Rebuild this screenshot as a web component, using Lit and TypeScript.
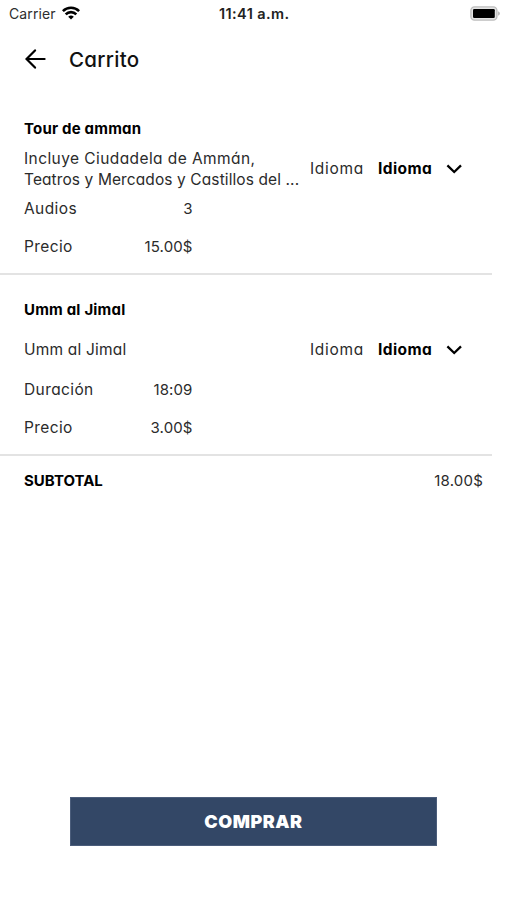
import { LitElement, html, css } from "lit";
import { customElement, property } from "lit/decorators.js";

@customElement("status-bar")
class StatusBar extends LitElement {
  static styles = css`
    :host {
      display: grid;
      grid-template-columns: 1fr auto 1fr;
      align-items: center;
      height: 28px;
      padding: 0 7px 0 9px;
      font: 400 14px/28px Inter, "Liberation Sans", sans-serif;
      font-feature-settings: normal;
      color: #2e2e2e;
    }
    .left { display: flex; align-items: center; gap: 6px; letter-spacing: 0.1px; }
    .time { font-weight: 600; font-size: 14.5px; color: #222; letter-spacing: 0.4px; margin-right: 0.5px; }
    .battery { justify-self: end; }
    svg { display: block; }
    .wifi { margin-top: -2px; }
    .battery { margin-top: -2px; }
  `;
  render() {
    return html`
      <div class="left">
        <span>Carrier</span>
        <svg class="wifi" width="18" height="14" viewBox="0 0 18 14" fill="none" stroke="#000" stroke-width="2.6">
          <path d="M0.9 5.1A11.6 11.6 0 0 1 17.1 5.1" />
          <path d="M3.7 8.3A7.5 7.5 0 0 1 14.3 8.3" />
          <path d="M9 13.6L6.2 10.8A4 4 0 0 1 11.8 10.8Z" fill="#000" stroke="none" />
        </svg>
      </div>
      <span class="time">11:41 a.m.</span>
      <svg class="battery" width="30" height="15" viewBox="0 0 30 15">
        <rect x="0.9" y="0.9" width="26" height="13.2" rx="3.6" fill="#e4e4e4" stroke="#bdbdbd" stroke-width="1.4" />
        <rect x="3" y="3" width="21.8" height="9" rx="1.2" fill="#000" />
        <path d="M28 5.2Q30 6.2 30 7.5T28 9.8Z" fill="#bdbdbd" />
      </svg>
    `;
  }
}

@customElement("cart-item")
class CartItem extends LitElement {
  @property() heading = "";
  @property({ attribute: false }) lines: string[] = [];
  @property() detail = "";
  @property() amount = "";
  @property() price = "";

  static styles = css`
    :host {
      display: block;
      box-sizing: border-box;
      width: 492px;
      height: 181px;
      padding: 24px 0 0 24px;
      border-bottom: 2px solid #e3e3e3;
      line-height: 21px;
    }
    .heading { font-weight: 700; color: #000; height: 21px; letter-spacing: 0.2px; }
    .middle { display: flex; align-items: center; height: 59px; }
    .description { width: 286px; white-space: nowrap; font-size: 15.5px; letter-spacing: 0.1px; }
    .line:first-child { letter-spacing: 0.42px; }
    .line:only-child { letter-spacing: 0.2px; }
    .picker { display: flex; align-items: center; font-size: 15.5px; }
    .label { width: 68px; letter-spacing: 0.7px; }
    .value { width: 68px; font-weight: 700; color: #000; letter-spacing: 0.4px; }
    .row { display: flex; justify-content: space-between; width: 168.5px; height: 21px; letter-spacing: 0.1px; }
    .row + .row { margin-top: 17px; }
    .name { font-size: 15.5px; letter-spacing: 0.4px; }
    svg { display: block; }
  `;
  render() {
    return html`
      <div class="heading">${this.heading}</div>
      <div class="middle">
        <div class="description">${this.lines.map((line) => html`<div class="line">${line}</div>`)}</div>
        <div class="picker">
          <span class="label">Idioma</span>
          <span class="value">Idioma</span>
          <svg width="16" height="10" viewBox="0 0 16 10" fill="none" stroke="#000" stroke-width="2.3">
            <path d="M1.4 1.4L8.2 8L15 1.4" />
          </svg>
        </div>
      </div>
      <div class="row"><span class="name">${this.detail}</span><span>${this.amount}</span></div>
      <div class="row"><span class="name">Precio</span><span>${this.price}</span></div>
    `;
  }
}

@customElement("app-root")
class AppRoot extends LitElement {
  static styles = css`
    :host {
      display: flex;
      flex-direction: column;
      height: 900px;
      background: #fff;
      color: #2b2b2b;
      font: 400 15px/21px Inter, "Open Sans", sans-serif;
      font-feature-settings: "cv11" 1;
    }
    header { display: flex; align-items: center; height: 62px; padding-left: 25px; gap: 23px; }
    h1 { margin: 0; font-size: 20.5px; font-weight: 500; color: #111; letter-spacing: 0.3px; }
    .items { padding-top: 4px; }
    .subtotal { display: flex; justify-content: space-between; padding: 14px 24px 0; letter-spacing: 0.2px; }
    .subtotal strong { color: #000; font-weight: 700; letter-spacing: 0; }
    button {
      width: 367px;
      height: 49px;
      margin: auto 0 54px 70px;
      padding: 0;
      border: 1px solid #4b5d7b;
      background: #334766;
      color: #fff;
      font: 900 18px/47px Inter, "Open Sans", sans-serif;
      letter-spacing: 0.5px;
    }
    svg { display: block; }
  `;
  render() {
    return html`
      <status-bar></status-bar>
      <header>
        <svg width="21" height="20" viewBox="0 0 21 20" fill="none" stroke="#000" stroke-width="2.2" stroke-linecap="round">
          <path d="M10 1.4L1.5 10L10 18.6M1.8 10H19.6" />
        </svg>
        <h1>Carrito</h1>
      </header>
      <div class="items">
        <cart-item
          heading="Tour de amman"
          .lines=${["Incluye Ciudadela de Ammán,", "Teatros y Mercados y Castillos del ..."]}
          detail="Audios"
          amount="3"
          price="15.00$"
        ></cart-item>
        <cart-item
          heading="Umm al Jimal"
          .lines=${["Umm al Jimal"]}
          detail="Duración"
          amount="18:09"
          price="3.00$"
        ></cart-item>
      </div>
      <div class="subtotal"><strong>SUBTOTAL</strong><span>18.00$</span></div>
      <button>COMPRAR</button>
    `;
  }
}
